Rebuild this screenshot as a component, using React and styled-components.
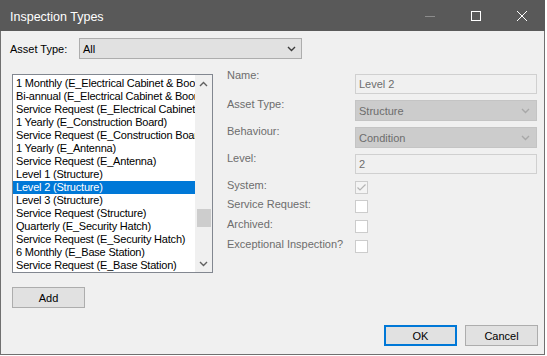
import React from 'react';
import styled, { createGlobalStyle } from 'styled-components';

const items = [
    '1 Monthly (E_Electrical Cabinet & Boom Gate)',
    'Bi-annual (E_Electrical Cabinet & Boom Gate)',
    'Service Request (E_Electrical Cabinet & Boom Gate)',
    '1 Yearly (E_Construction Board)',
    'Service Request (E_Construction Board)',
    '1 Yearly (E_Antenna)',
    'Service Request (E_Antenna)',
    'Level 1 (Structure)',
    'Level 2 (Structure)',
    'Level 3 (Structure)',
    'Service Request (Structure)',
    'Quarterly (E_Security Hatch)',
    'Service Request (E_Security Hatch)',
    '6 Monthly (E_Base Station)',
    'Service Request (E_Base Station)',
];

const selected = 'Level 2 (Structure)';

const Chevron = ({ up, color = '#606060' }) => (
    <svg width="9" height="6" viewBox="0 0 9 6">
        <path
            d={up ? 'M1 5 L4.5 1.5 L8 5' : 'M1 1 L4.5 4.5 L8 1'}
            fill="none"
            stroke={color}
            strokeWidth="1.4"
        />
    </svg>
);

const InspectionTypes = () => {
    return (
        <Window>
            <GlobalStyle />
            <TitleBar>
                <Title>Inspection Types</Title>
                <CaptionButton>
                    <svg width="10" height="10" viewBox="0 0 10 10">
                        <path d="M0 5.5 H10" stroke="#8c8c8c" strokeWidth="1" />
                    </svg>
                </CaptionButton>
                <CaptionButton>
                    <svg width="10" height="10" viewBox="0 0 10 10">
                        <rect x="0.5" y="0.5" width="9" height="9" fill="none" stroke="#fff" strokeWidth="1" />
                    </svg>
                </CaptionButton>
                <CaptionButton>
                    <svg width="10" height="10" viewBox="0 0 10 10">
                        <path d="M0 0 L10 10 M10 0 L0 10" stroke="#fff" strokeWidth="1" />
                    </svg>
                </CaptionButton>
            </TitleBar>

            <Body>
                <FilterRow>
                    <FilterLabel>Asset Type:</FilterLabel>
                    <Select>
                        <span>All</span>
                        <Chevron color="#3c3c3c" />
                    </Select>
                </FilterRow>

                <MainRow>
                    <ListBox>
                        <ListItems>
                            {items.map(item => (
                                <ListItem key={item} $selected={item === selected}>{item}</ListItem>
                            ))}
                        </ListItems>
                        <ScrollBar>
                            <ScrollArrow><Chevron up /></ScrollArrow>
                            <ScrollTrack>
                                <Thumb />
                            </ScrollTrack>
                            <ScrollArrow><Chevron /></ScrollArrow>
                        </ScrollBar>
                    </ListBox>

                    <Form>
                        <FieldLabel $offset={-5}>Name:</FieldLabel>
                        <TextBox>Level 2</TextBox>

                        <FieldLabel>Asset Type:</FieldLabel>
                        <Combo>
                            <span>Structure</span>
                            <Chevron color="#a8a8a8" />
                        </Combo>

                        <FieldLabel>Behaviour:</FieldLabel>
                        <Combo>
                            <span>Condition</span>
                            <Chevron color="#a8a8a8" />
                        </Combo>

                        <FieldLabel>Level:</FieldLabel>
                        <TextBox>2</TextBox>

                        <FieldLabel>System:</FieldLabel>
                        <CheckBox $checked>
                            <svg width="11" height="11" viewBox="0 0 11 11">
                                <path d="M1.5 5.5 L4 8 L9.5 2.5" fill="none" stroke="#b4b4b4" strokeWidth="1.2" />
                            </svg>
                        </CheckBox>

                        <FieldLabel>Service Request:</FieldLabel>
                        <CheckBox />

                        <FieldLabel>Archived:</FieldLabel>
                        <CheckBox />

                        <FieldLabel>Exceptional Inspection?</FieldLabel>
                        <CheckBox />
                    </Form>
                </MainRow>

                <AddButton>Add</AddButton>

                <ButtonBar>
                    <Button $default>OK</Button>
                    <Button>Cancel</Button>
                </ButtonBar>
            </Body>
        </Window>
    )
};

const GlobalStyle = createGlobalStyle`
    body {
        margin: 0;
        background: #ffffff;
        font-family: "Liberation Sans", Arial, sans-serif;
    }
`;

const Window = styled.div`
    width: 545px;
    height: 355px;
    box-sizing: border-box;
    border: 1px solid #707070;
    border-top: none;
    background: #f0f0f0;
    display: flex;
    flex-direction: column;
`;

const TitleBar = styled.div`
    height: 31px;
    margin: 0 -1px;
    background: #595959;
    display: flex;
    align-items: center;
    padding-left: 10px;
    color: #ffffff;
    font-size: 12.5px;
`;

const Title = styled.div`
    flex: 1;
    margin-top: 2px;
`;

const CaptionButton = styled.div`
    width: 46px;
    height: 31px;
    display: flex;
    align-items: center;
    justify-content: center;
    svg { margin-top: 1px; }
`;

const Body = styled.div`
    flex: 1;
    display: flex;
    flex-direction: column;
    padding: 7px 6px 0 9px;
    font-size: 11px;
`;

const FilterRow = styled.div`
    display: flex;
    align-items: center;
`;

const FilterLabel = styled.span`
    width: 69px;
    color: #000;
`;

const Select = styled.div`
    width: 223px;
    height: 21px;
    box-sizing: border-box;
    border: 1px solid #adadad;
    background: #e1e1e1;
    display: flex;
    align-items: center;
    justify-content: space-between;
    padding: 0 5px 0 3px;
    color: #000;
`;

const MainRow = styled.div`
    display: flex;
    margin-top: 15px;
`;

const ListBox = styled.div`
    width: 201px;
    height: 199px;
    box-sizing: border-box;
    margin-left: 2px;
    border: 1px solid #828790;
    background: #ffffff;
    display: flex;
`;

const ListItems = styled.div`
    flex: 1;
    min-width: 0;
    padding-top: 2px;
    overflow: hidden;
`;

const ListItem = styled.div`
    height: 13px;
    line-height: 13px;
    padding-left: 3px;
    white-space: nowrap;
    overflow: hidden;
    letter-spacing: -0.2px;
    color: ${p => p.$selected ? '#ffffff' : '#000000'};
    background: ${p => p.$selected ? '#0078d7' : 'transparent'};
`;

const ScrollBar = styled.div`
    width: 17px;
    background: #f0f0f0;
    display: flex;
    flex-direction: column;
`;

const ScrollArrow = styled.div`
    height: 17px;
    display: flex;
    align-items: center;
    justify-content: center;
`;

const ScrollTrack = styled.div`
    flex: 1;
    padding-top: 117px;
`;

const Thumb = styled.div`
    height: 18px;
    margin: 0 1px 0 2px;
    background: #cdcdcd;
`;

const Form = styled.div`
    margin-left: 14px;
    display: grid;
    grid-template-columns: 128px 182px;
    grid-template-rows: 26px 27px 27px 27px 19px 20px 20px 13px;
    align-items: start;
`;

const FieldLabel = styled.div`
    line-height: 13px;
    margin-top: ${p => p.$offset ?? -2}px;
    color: #6d6d6d;
    white-space: nowrap;
`;

const TextBox = styled.div`
    height: 20px;
    box-sizing: border-box;
    border: 1px solid #d0d0d0;
    background: #f0f0f0;
    color: #6d6d6d;
    padding-left: 3px;
    display: flex;
    align-items: center;
`;

const Combo = styled.div`
    height: 21px;
    box-sizing: border-box;
    border: 1px solid #c4c4c4;
    background: #cccccc;
    color: #6d6d6d;
    padding: 0 6px 0 3px;
    display: flex;
    align-items: center;
    justify-content: space-between;
`;

const CheckBox = styled.div`
    width: 13px;
    height: 13px;
    box-sizing: border-box;
    border: 1px solid #cccccc;
    background: ${p => p.$checked ? '#f4f4f4' : '#ffffff'};
    display: flex;
    align-items: center;
    justify-content: center;
`;

const Button = styled.div`
    width: 73px;
    height: 21px;
    box-sizing: border-box;
    border: ${p => p.$default ? '2px solid #0078d7' : '1px solid #adadad'};
    background: #e1e1e1;
    color: #000;
    display: flex;
    align-items: center;
    justify-content: center;
`;

const AddButton = styled(Button)`
    margin: 14px 0 0 2px;
`;

const ButtonBar = styled.div`
    display: flex;
    justify-content: flex-end;
    gap: 8px;
    margin-top: 17px;
`;

export default InspectionTypes;
